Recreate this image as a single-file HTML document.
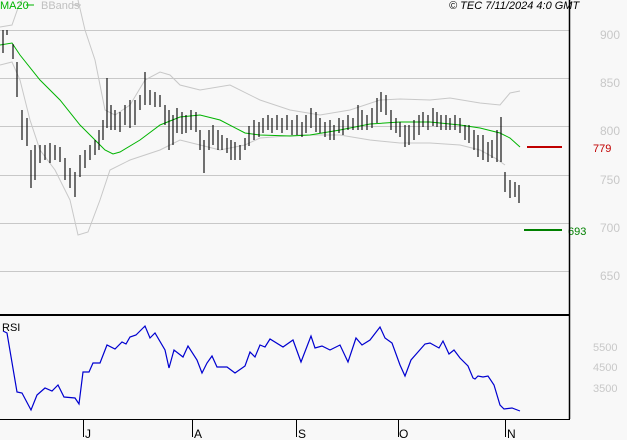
<!DOCTYPE html>
<html><head><style>
html,body{margin:0;padding:0;background:#f8f8f8;}
svg{display:block;}
text{font-family:"Liberation Sans",sans-serif;}
</style></head><body>
<svg width="627" height="440" xmlns="http://www.w3.org/2000/svg">
<rect width="627" height="440" fill="#f8f8f8"/>
<g stroke="#c8c8c8" stroke-width="1">
<line x1="0" y1="30.5" x2="569" y2="30.5"/>
<line x1="0" y1="78.5" x2="569" y2="78.5"/>
<line x1="0" y1="126.5" x2="569" y2="126.5"/>
<line x1="0" y1="175.5" x2="569" y2="175.5"/>
<line x1="0" y1="223.5" x2="569" y2="223.5"/>
<line x1="0" y1="271.5" x2="569" y2="271.5"/>
</g>
<g fill="#c8c8c8" font-size="12">
<text x="600" y="39">900</text><text x="600" y="87">850</text><text x="600" y="135">800</text>
<text x="600" y="184">750</text><text x="600" y="232">700</text><text x="600" y="280">650</text>
<text x="593" y="351" font-size="11">5500</text><text x="593" y="371" font-size="11">4500</text><text x="593" y="392" font-size="11">3500</text>
</g>
<polyline fill="none" stroke="#c8c8c8" points="0,27 12,25 18,8 22,0"/>
<polyline fill="none" stroke="#c8c8c8" points="78,0 85,30 95,60 105,110 115,115 130,105 145,80 160,72 170,75 180,85 200,90 230,85 260,100 290,110 320,115 350,110 380,100 400,99 430,100 450,98 480,103 500,105 510,93 520,91"/>
<polyline fill="none" stroke="#c8c8c8" points="0,65 12,62 20,80 30,120 40,150 55,170 70,200 78,235 88,232 100,200 110,170 130,160 160,150 180,140 200,145 220,150 245,145 260,138 300,135 340,135 370,140 400,143 430,143 460,145 480,150 495,158 505,165"/>
<polyline fill="none" stroke="#00b400" points="0,45 12,43 20,55 40,80 60,100 80,125 95,140 105,150 113,154 120,152 140,140 160,125 180,117 200,115 220,120 245,133 260,135 290,136 310,135 340,130 370,124 400,122 430,122 460,125 480,128 500,133 510,138 520,147"/>
<path stroke="#000" stroke-width="1.1" fill="none" d="M3,30v23 M7,30v5 M13,44v15 M17,62v35 M22,110v30 M27,118v28 M31,150v38 M35,145v35 M40,145v18 M45,145v15 M50,143v20 M55,145v15 M60,147v15 M65,158v22 M70,168v20 M75,172v25 M80,155v22 M85,150v18 M90,145v15 M95,140v15 M99,130v20 M103,120v20 M107,78v50 M111,105v25 M115,110v20 M120,112v20 M125,105v20 M130,100v28 M135,100v25 M140,95v15 M145,72v33 M150,90v15 M155,92v15 M160,95v12 M165,105v20 M169,110v40 M173,115v30 M177,108v25 M182,112v22 M186,115v18 M191,110v20 M196,112v20 M200,130v20 M204,140v33 M209,130v20 M213,125v20 M218,130v20 M222,135v15 M227,138v15 M231,140v20 M235,142v18 M240,145v15 M245,138v12 M249,126v20 M254,120v20 M259,122v15 M263,118v15 M268,115v15 M272,118v15 M277,115v15 M282,118v15 M287,115v15 M292,120v15 M297,115v20 M302,122v15 M306,115v18 M311,108v20 M316,112v20 M320,118v15 M325,122v15 M330,120v20 M334,125v15 M339,118v15 M343,120v15 M348,115v15 M353,118v12 M358,105v25 M362,110v20 M367,115v15 M372,108v20 M377,98v25 M381,92v20 M386,95v20 M391,110v20 M396,118v15 M400,122v15 M405,125v22 M409,125v20 M414,120v20 M419,115v20 M423,112v15 M428,115v15 M433,108v18 M437,112v15 M441,115v15 M446,115v15 M450,118v12 M455,115v15 M460,118v15 M465,125v15 M469,125v18 M474,130v20 M478,135v22 M483,135v25 M488,142v20 M492,140v18 M497,130v32 M501,117v45 M505,172v20 M510,180v18 M515,182v15 M519,185v18"/>
<line x1="527" y1="147" x2="562" y2="147" stroke="#c00000" stroke-width="2"/>
<text x="593" y="152" fill="#c00000" font-size="11">779</text>
<line x1="524" y1="230" x2="562" y2="230" stroke="#008000" stroke-width="2"/>
<text x="568" y="235" fill="#008000" font-size="11">693</text>
<line x1="569.5" y1="0" x2="569.5" y2="419" stroke="#000" stroke-width="1.5"/>
<line x1="0" y1="315" x2="569" y2="315" stroke="#000" stroke-width="2"/>
<line x1="0" y1="419.5" x2="570" y2="419.5" stroke="#000" stroke-width="1"/>
<polyline fill="none" stroke="#0000d0" stroke-width="1.2" points="3,331 7,333 17,392 22,393 31,410 37,395 45,388 52,391 58,385 64,397 75,398 79,404 83,372 89,372 93,363 100,363 107,345 115,349 122,342 126,344 130,337 136,335 145,326 150,338 155,333 165,350 169,368 174,350 183,357 188,346 197,360 202,373 207,363 212,356 217,367 227,367 235,373 245,366 250,352 255,357 260,345 265,347 270,339 283,347 293,340 301,362 311,336 315,348 322,346 330,350 340,345 348,362 356,338 362,345 370,340 380,327 385,338 392,343 400,365 405,376 411,360 418,352 425,344 430,343 439,348 443,341 449,354 454,350 460,358 468,366 473,378 475,379 478,376 483,377 488,376 494,385 500,405 504,409 512,408 520,411"/>
<g stroke="#000"><line x1="83.5" y1="419" x2="83.5" y2="437"/><line x1="192.5" y1="419" x2="192.5" y2="437"/><line x1="296.5" y1="419" x2="296.5" y2="437"/><line x1="398.5" y1="419" x2="398.5" y2="437"/><line x1="505.5" y1="419" x2="505.5" y2="437"/></g>
<g font-size="12" fill="#000"><text x="85" y="438">J</text><text x="194" y="438">A</text><text x="298" y="438">S</text><text x="399" y="438">O</text><text x="507" y="438">N</text></g>
<text x="2" y="331" font-size="11" fill="#000">RSI</text>
<text x="0" y="9" font-size="11" fill="#00b400">MA20</text>
<line x1="26" y1="5" x2="34" y2="5" stroke="#00b400"/>
<text x="41" y="9" font-size="11" fill="#c0c0c0">BBands</text>
<line x1="73" y1="5" x2="81" y2="5" stroke="#c0c0c0"/>
<text x="449" y="9" font-size="11" font-style="italic" fill="#000">© TEC 7/11/2024 4:0 GMT</text>
</svg>
</body></html>
